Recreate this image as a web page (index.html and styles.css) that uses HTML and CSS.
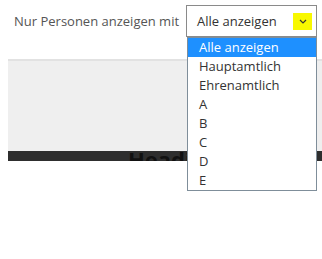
FILE: index.html
```html
<!DOCTYPE html>
<html>
<head>
  <meta charset="UTF-8">
  <title>Personenfilter</title>
  <link rel="stylesheet" href="styles.css">
</head>
<body>
  <div class="filter">
    <label class="filter-label">Nur Personen anzeigen mit</label>
    <div class="picker">
      <div class="picker-box">
        <span>Alle anzeigen</span>
        <span class="picker-arrow">
          <svg width="8" height="5" viewBox="0 0 8 5"><path d="M1 1 L4 4 L7 1" fill="none" stroke="#333" stroke-width="1.2"/></svg>
        </span>
      </div>
      <ul class="options">
        <li class="selected">Alle anzeigen</li>
        <li>Hauptamtlich</li>
        <li>Ehrenamtlich</li>
        <li>A</li>
        <li>B</li>
        <li>C</li>
        <li>D</li>
        <li>E</li>
      </ul>
    </div>
  </div>

  <div class="hero">
    <div class="hero-body"></div>
    <div class="hero-bar"><span class="hero-title">Heading</span></div>
  </div>
</body>
</html>
```

FILE: styles.css
```css
* { box-sizing: border-box; }
html {
  overflow: hidden;
}
body {
  margin: 0; padding: 0;
  background: white;
  font-family: 'Open Sans', sans-serif;
  min-height: 259px;
}
.filter {
  display: flex;
  align-items: center;
  padding: 5px 0 0 14px;
  position: relative;
  z-index: 2;
}
.filter-label {
  flex: 0 0 172px;
  font-size: 13px;
  color: #555;
}
.picker {
  position: relative;
  width: 131px;
}
.picker-box {
  height: 32px;
  border: 1px solid #8a8a8a;
  display: flex;
  align-items: center;
  justify-content: space-between;
  padding: 0 4px 0 10px;
  font-size: 13px;
  color: #333;
}
.picker-arrow {
  width: 19px; height: 17px;
  background: #f8f800;
  display: flex;
  align-items: center;
  justify-content: center;
}
.options {
  position: absolute;
  top: 32px; left: 1px;
  width: 130px;
  margin: 0; padding: 0;
  list-style: none;
  background: white;
  border: 1px solid #7f8e9a;
}
.options li {
  height: 19px;
  line-height: 19px;
  padding-left: 11px;
  font-size: 13px;
  color: #333;
}
.options li.selected {
  background: #1e90ff;
  color: white;
}
.hero {
  margin: 22px 0 0 8px;
}
.hero-body {
  height: 92px;
  background: #efefef;
  border-top: 2px solid #e2e2e2;
}
.hero-bar {
  height: 10px;
  background: #2e2e2e;
  overflow: hidden;
  padding-left: 120px;
}
.hero-title {
  display: block;
  font-size: 22px;
  font-weight: bold;
  line-height: 22px;
  color: #111;
  margin-top: -3px;
}
```
